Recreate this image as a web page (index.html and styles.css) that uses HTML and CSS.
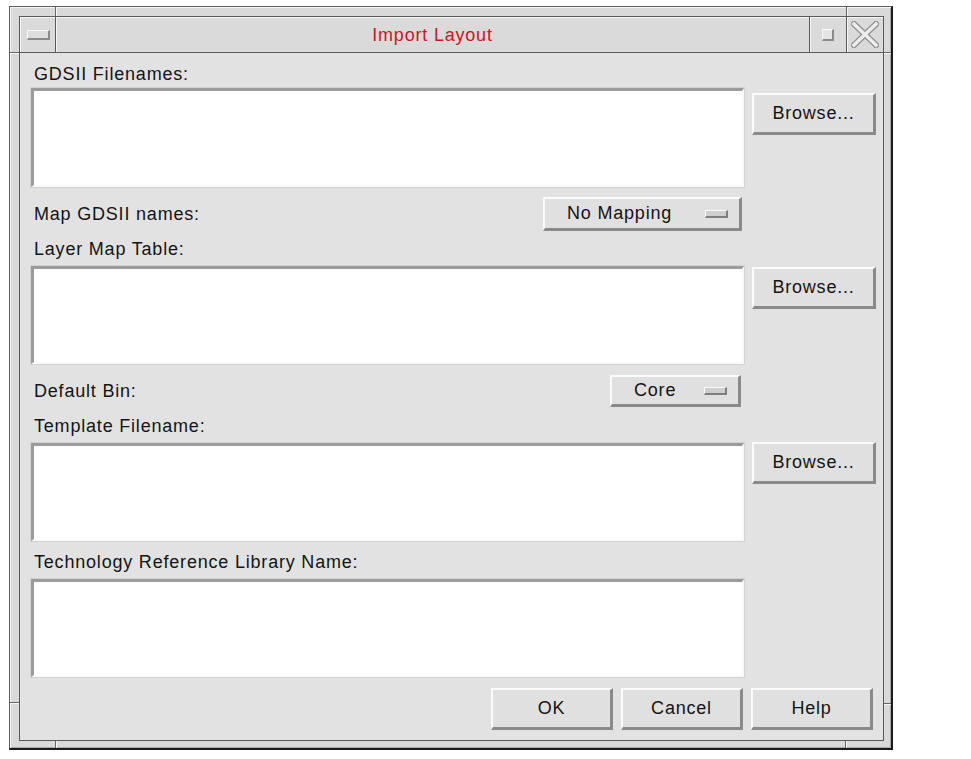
FILE: index.html
```html
<!DOCTYPE html>
<html>
<head>
<meta charset="utf-8">
<title>Import Layout</title>
<link rel="stylesheet" href="styles.css">
</head>
<body>
<div class="window">
  <span class="tick tick-v tick-tl"></span>
  <span class="tick tick-v tick-tr"></span>
  <span class="tick tick-v tick-bl"></span>
  <span class="tick tick-v tick-br"></span>
  <span class="tick tick-h tick-lt"></span>
  <span class="tick tick-h tick-lb"></span>
  <span class="tick tick-h tick-rt"></span>
  <span class="tick tick-h tick-rb"></span>
  <div class="client">
    <div class="titlebar">
      <div class="tb-cell tb-menu"><span class="menu-glyph"></span></div>
      <div class="tb-title">Import Layout</div>
      <div class="tb-cell tb-max"><span class="max-glyph"></span></div>
      <div class="tb-cell tb-close">
        <svg width="28" height="27" viewBox="0 0 28 27">
          <g stroke-linecap="square">
            <line x1="3" y1="3" x2="25" y2="24" stroke="#8e8e8e" stroke-width="6"/>
            <line x1="25" y1="3" x2="3" y2="24" stroke="#8e8e8e" stroke-width="6"/>
            <line x1="3" y1="3" x2="25" y2="24" stroke="#ececec" stroke-width="3.6"/>
            <line x1="25" y1="3" x2="3" y2="24" stroke="#ececec" stroke-width="3.6"/>
          </g>
        </svg>
      </div>
    </div>
    <div class="content">
      <div class="label l1">GDSII Filenames:</div>
      <div class="field-row r1">
        <div class="textbox tb-tall"></div>
        <button class="btn browse b1">Browse...</button>
      </div>
      <div class="option-row r-map">
        <span class="label">Map GDSII names:</span>
        <button class="btn option opt-map">No Mapping<span class="ind"></span></button>
      </div>
      <div class="label l2">Layer Map Table:</div>
      <div class="field-row r2">
        <div class="textbox"></div>
        <button class="btn browse b2">Browse...</button>
      </div>
      <div class="option-row r-bin">
        <span class="label">Default Bin:</span>
        <button class="btn option opt-bin">Core<span class="ind"></span></button>
      </div>
      <div class="label l3">Template Filename:</div>
      <div class="field-row r3">
        <div class="textbox tb3"></div>
        <button class="btn browse">Browse...</button>
      </div>
      <div class="label l4">Technology Reference Library Name:</div>
      <div class="field-row r4">
        <div class="textbox"></div>
      </div>
      <div class="actions">
        <button class="btn action">OK</button>
        <button class="btn action">Cancel</button>
        <button class="btn action">Help</button>
      </div>
    </div>
  </div>
</div>
</body>
</html>
```

FILE: styles.css
```css
html, body {
  margin: 0;
  padding: 0;
  background: #ffffff;
}

body {
  font-family: "Liberation Sans", Arial, Helvetica, sans-serif;
  font-size: 18px;
  letter-spacing: 0.8px;
  color: #141414;
}

.window {
  position: relative;
  box-sizing: border-box;
  width: 884px;
  height: 744px;
  margin: 6px 0 0 9px;
  padding: 9px 7px 7px 9px;
  background: #d9d9d9;
  border-style: solid;
  border-width: 1px 2px 2px 1px;
  border-color: #5e5e5e #1c1c1c #1c1c1c #5e5e5e;
  box-shadow: inset 1px 1px 0 #f6f6f6, inset -1px -1px 0 #a8a8a8;
}

/* frame resize handle marks */
.tick {
  position: absolute;
  background: #666;
}
.tick-v { width: 1px; box-shadow: 1px 0 0 #f6f6f6; }
.tick-h { height: 1px; box-shadow: 0 1px 0 #f6f6f6; }
.tick-tl { left: 45px; top: 0; height: 9px; }
.tick-tr { left: 836px; top: 0; height: 9px; }
.tick-bl { left: 45px; top: 734px; height: 7px; }
.tick-br { left: 835px; top: 734px; height: 7px; }
.tick-lt { left: 0; top: 45px; width: 9px; }
.tick-lb { left: 0; top: 695px; width: 9px; }
.tick-rt { left: 874px; top: 45px; width: 7px; }
.tick-rb { left: 874px; top: 696px; width: 7px; }

.client {
  box-sizing: border-box;
  height: 100%;
  border: 1px solid #5a5a5a;
  display: flex;
  flex-direction: column;
  background: #e2e2e2;
}

/* title bar */
.titlebar {
  height: 35px;
  display: flex;
  border-bottom: 1px solid #5a5a5a;
  background: #dadada;
}
.tb-cell {
  display: flex;
  align-items: center;
  justify-content: center;
  box-shadow: inset 1px 1px 0 #f6f6f6;
}
.tb-menu {
  width: 35px;
  border-right: 1px solid #5a5a5a;
}
.tb-title {
  flex: 1;
  text-align: center;
  color: #d3121c;
  line-height: 33px;
  padding-top: 2px;
  box-sizing: border-box;
  box-shadow: inset 1px 1px 0 #f6f6f6;
}
.tb-max {
  width: 36px;
  border-left: 1px solid #5a5a5a;
}
.tb-close {
  width: 36px;
  border-left: 1px solid #5a5a5a;
}
.menu-glyph {
  box-sizing: border-box;
  width: 23px;
  height: 10px;
  margin-left: 2px;
  border-style: solid;
  border-width: 1px 2px 2px 1px;
  border-color: #fafafa #8a8a8a #8a8a8a #fafafa;
  background: #dcdcdc;
}
.max-glyph {
  box-sizing: border-box;
  width: 12px;
  height: 12px;
  border-style: solid;
  border-width: 1px 2px 2px 1px;
  border-color: #fafafa #8a8a8a #8a8a8a #fafafa;
  background: #e4e4e4;
}

/* content */
.content {
  flex: 1;
  display: flex;
  flex-direction: column;
  padding-left: 11px;
}

.label {
  line-height: 20px;
  height: 20px;
  padding-left: 3px;
  white-space: nowrap;
}
.l1 { margin-top: 11px; }
.l2 { margin-top: 8px; }
.l3 { margin-top: 9px; }
.l4 { margin-top: 11px; }

.field-row {
  display: flex;
  align-items: flex-start;
  gap: 8px;
}
.r1 { margin-top: 4px; }
.r2 { margin-top: 7px; }
.r3 { margin-top: 6px; }
.r4 { margin-top: 7px; }

.textbox {
  box-sizing: border-box;
  width: 713px;
  height: 98px;
  background: #ffffff;
  border-style: solid;
  border-width: 3px 2px 2px 3px;
  border-color: #9c9c9c #f9f9f9 #f9f9f9 #9c9c9c;
  box-shadow: 0 0 0 1px #d2d2d2;
}
.tb-tall { height: 99px; }
.tb3 { margin-top: 1px; }

.btn {
  box-sizing: border-box;
  border-style: solid;
  border-width: 2px 3px 3px 2px;
  border-color: #fbfbfb #8a8a8a #8a8a8a #fbfbfb;
  background: #e0e0e0;
  font: inherit;
  letter-spacing: inherit;
  color: inherit;
  padding: 0;
  margin: 0;
}

.browse {
  width: 124px;
  height: 42px;
}
.b1 { margin-top: 5px; }
.b2 { margin-top: 1px; }

.option-row {
  width: 713px;
  display: flex;
  align-items: center;
  justify-content: space-between;
}
.r-map { margin-top: 10px; height: 34px; }
.r-bin { margin-top: 11px; height: 32px; }

.option {
  display: flex;
  align-items: center;
  justify-content: space-between;
  padding: 0 11px 0 22px;
  height: 100%;
}
.opt-map { width: 199px; margin-right: 2px; }
.opt-bin { width: 131px; margin-right: 3px; }

.ind {
  box-sizing: border-box;
  width: 23px;
  height: 8px;
  border-style: solid;
  border-width: 1px 2px 2px 1px;
  border-color: #fafafa #7e7e7e #7e7e7e #fafafa;
  background: #cfcfcf;
}

.actions {
  display: flex;
  justify-content: flex-end;
  gap: 8px;
  margin-top: 11px;
  padding-right: 10px;
}
.action {
  width: 122px;
  height: 42px;
}
```
